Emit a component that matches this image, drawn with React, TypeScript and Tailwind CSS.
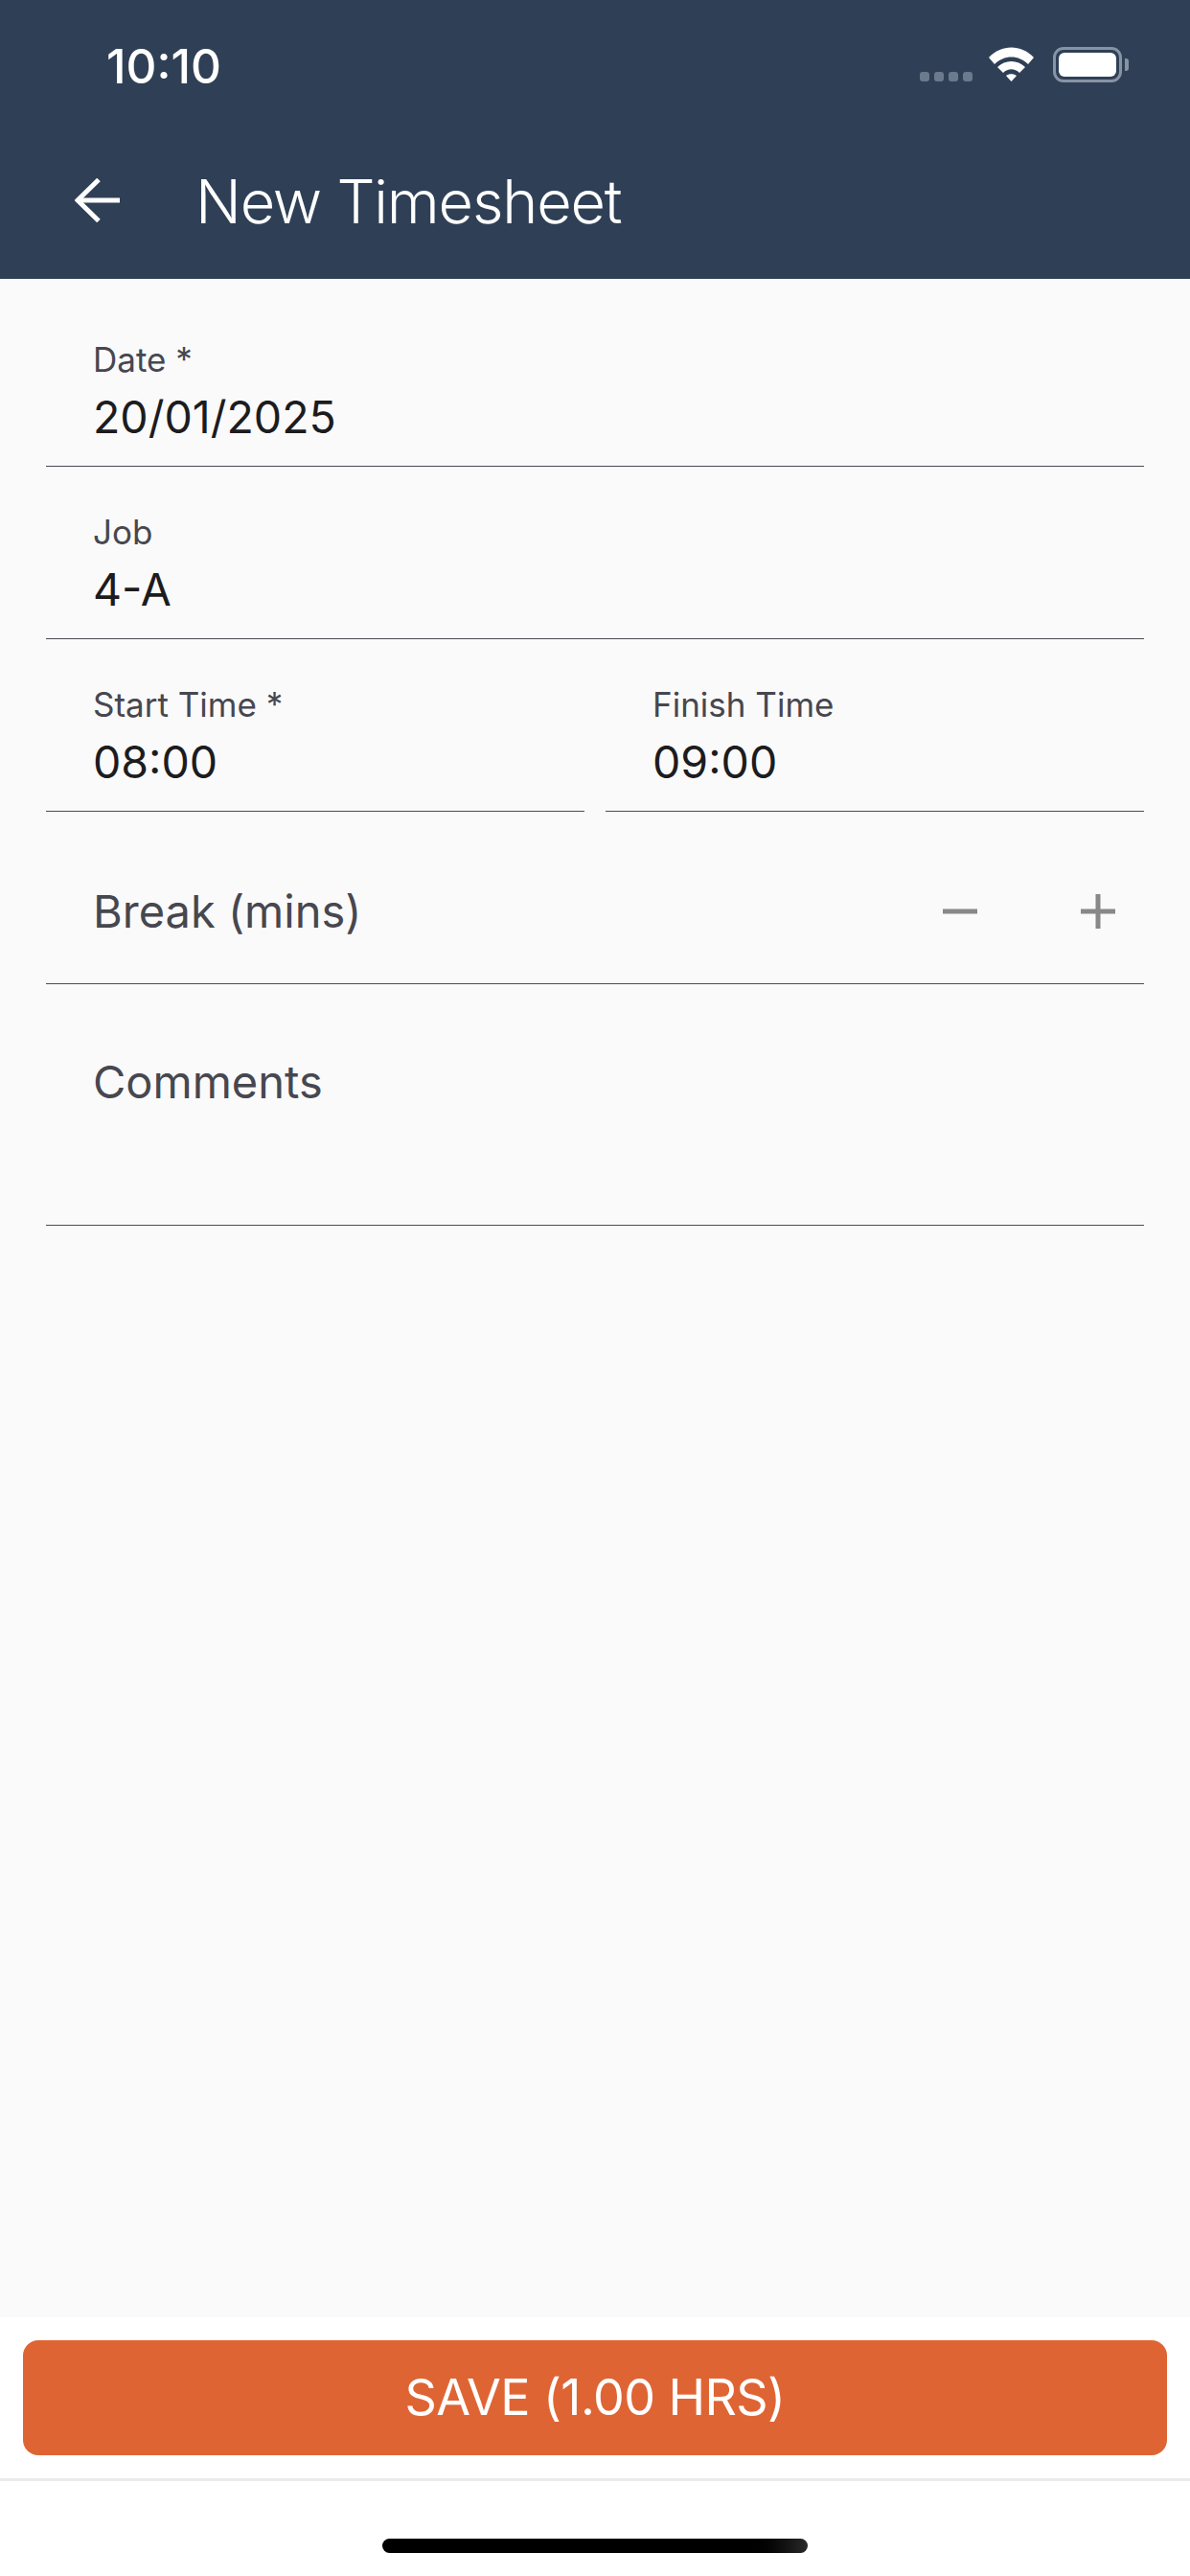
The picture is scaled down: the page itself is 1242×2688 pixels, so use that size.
import React from "react";

const font = { fontFamily: "Inter, 'Liberation Sans', sans-serif" };

function Field({ label, value, className = "" }: { label: string; value: string; className?: string }) {
  return (
    <div className={`h-[180px] border-b border-[#4b4b52] pl-[49px] pt-[48px] ${className}`}>
      <div className="text-[35px] leading-[40px] text-[#47474f]">{label}</div>
      <div className="mt-[12px] text-[46.5px] leading-[56px] text-[#1c1c1e]">{value}</div>
    </div>
  );
}

export default function App() {
  return (
    <div className="flex h-[2688px] w-[1242px] flex-col overflow-hidden bg-white" style={font}>
      <header className="h-[291px] shrink-0 bg-[#2f4056] text-white">
        <div className="flex h-[132px] items-start justify-between pl-[111px] pr-[64px] pt-[41px]">
          <div className="text-[49.5px] font-medium leading-[56px]">10:10</div>
          <div className="flex items-start pt-[8px]">
            <div className="mt-[26px] flex gap-[5px]">
              <span className="h-[10px] w-[10px] rounded-[3px] bg-[#6b7a8c]" />
              <span className="h-[10px] w-[10px] rounded-[3px] bg-[#6b7a8c]" />
              <span className="h-[10px] w-[10px] rounded-[3px] bg-[#6b7a8c]" />
              <span className="h-[10px] w-[10px] rounded-[3px] bg-[#6b7a8c]" />
            </div>
            <svg className="ml-[17px]" width="47" height="36" viewBox="0 0 47 36" fill="#fff">
              <path d="M0 11 C13 -3 34 -3 47 11 L41 18 C31 8 16 8 6 18 Z" />
              <path d="M9 21 C17 13 30 13 38 21 L32 27 C27 22 20 22 15 27 Z" />
              <path d="M18 30 C21 27.5 26 27.5 29 30 L23.5 36 Z" />
            </svg>
            <div className="ml-[20px] flex items-center">
              <div className="flex h-[37px] w-[72px] items-center justify-center rounded-[11px] border-[3px] border-[#8794a5]">
                <div className="h-[25px] w-[60px] rounded-[6px] bg-white" />
              </div>
              <div className="ml-[3px] h-[13px] w-[4px] rounded-r-[3px] bg-[#8794a5]" />
            </div>
          </div>
        </div>
        <div className="flex h-[159px] items-start pl-[78px]">
          <svg className="mt-[54px]" width="47" height="46" viewBox="0 0 47 46" fill="none" stroke="#fff" strokeWidth="5">
            <path d="M47 23 H3" />
            <path d="M25 1.5 L3 23 L25 44.5" />
          </svg>
          <div className="ml-[79px] mt-[40px] text-[63px] font-light leading-[76px] tracking-[-1.2px]">New Timesheet</div>
        </div>
      </header>

      <main className="flex-1 bg-[#fafafa] px-[48px] pt-[16px]">
        <Field label="Date *" value="20/01/2025" />
        <Field label="Job" value="4-A" />
        <div className="flex gap-[22px]">
          <Field label="Start Time *" value="08:00" className="flex-1" />
          <Field label="Finish Time" value="09:00" className="flex-1" />
        </div>
        <div className="flex h-[180px] items-center justify-between border-b border-[#4b4b52] pl-[49px] pr-[30px] pt-[28px]">
          <div className="text-[47px] leading-[56px] text-[#47474f]">Break (mins)</div>
          <div className="flex items-center gap-[108px]">
            <svg width="36" height="36" viewBox="0 0 36 36" stroke="#888888" strokeWidth="5">
              <path d="M0 18 H36" />
            </svg>
            <svg width="36" height="36" viewBox="0 0 36 36" stroke="#888888" strokeWidth="5">
              <path d="M0 18 H36 M18 0 V36" />
            </svg>
          </div>
        </div>
        <div className="h-[252px] border-b border-[#4b4b52] pl-[49px] pt-[74px]">
          <div className="text-[47px] leading-[56px] text-[#47474f]">Comments</div>
        </div>
      </main>

      <footer className="h-[270px] shrink-0 bg-white">
        <div className="h-[171px] border-b-[3px] border-[#ebebeb] px-[24px] pt-[24px]">
          <button className="flex h-[120px] w-full items-center justify-center rounded-[16px] bg-[#df6434] text-[52px] font-normal tracking-[-0.6px] text-white">
            SAVE (1.00 HRS)
          </button>
        </div>
        <div className="flex justify-center pt-[60px]">
          <div className="h-[15px] w-[444px] rounded-[8px] bg-gradient-to-r from-black from-85% to-[#2a2a2a]" />
        </div>
      </footer>
    </div>
  );
}
